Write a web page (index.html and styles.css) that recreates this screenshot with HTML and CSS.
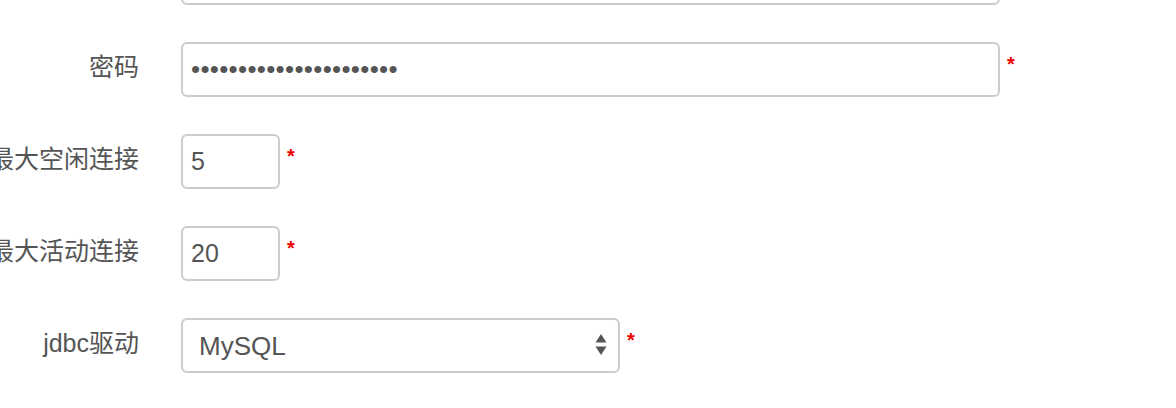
FILE: index.html
```html
<!DOCTYPE html>
<html lang="zh">
<head>
<meta charset="utf-8">
<title>数据源配置</title>
<link rel="stylesheet" href="styles.css">
</head>
<body>
<form class="form">
  <div class="row">
    <span class="label"></span>
    <input class="ctl ctl-wide" type="text" value="" aria-label="用户名">
  </div>
  <div class="row">
    <label class="label">密码</label>
    <input class="ctl ctl-wide ctl-pass" type="password" value="jdbcpassword1234567890">
    <span class="req">*</span>
  </div>
  <div class="row">
    <label class="label">最大空闲连接</label>
    <input class="ctl ctl-small" type="text" value="5">
    <span class="req">*</span>
  </div>
  <div class="row">
    <label class="label">最大活动连接</label>
    <input class="ctl ctl-small" type="text" value="20">
    <span class="req">*</span>
  </div>
  <div class="row">
    <label class="label">jdbc驱动</label>
    <div class="select-wrap">
      <select class="ctl ctl-select">
        <option>MySQL</option>
        <option>Oracle</option>
        <option>PostgreSQL</option>
      </select>
      <svg class="select-arrows" width="12" height="24" viewBox="0 0 12 24" aria-hidden="true">
        <path d="M6 1 L11.5 9.5 L0.5 9.5 Z" fill="#555"/>
        <path d="M0.5 13.5 L11.5 13.5 L6 22 Z" fill="#555"/>
      </svg>
    </div>
    <span class="req">*</span>
  </div>
</form>
</body>
</html>
```

FILE: styles.css
```css
html, body {
  margin: 0;
  padding: 0;
  background: #fff;
  overflow: hidden;
}

body {
  width: 1176px;
  height: 408px;
  font-family: "Liberation Sans", "Noto Sans CJK SC", sans-serif;
  color: #555;
}

.form {
  display: flex;
  flex-direction: column;
  gap: 38px;
  margin-top: -50px;
}

.row {
  display: flex;
  align-items: flex-start;
  height: 54px;
}

.label {
  flex: 0 0 139px;
  width: 139px;
  display: flex;
  justify-content: flex-end;
  white-space: nowrap;
  font-size: 25px;
  line-height: 30px;
  padding-top: 10px;
  margin-right: 42px;
  color: #555;
}

.ctl {
  box-sizing: border-box;
  height: 55px;
  border: 2px solid #ccc;
  border-radius: 6px;
  background: #fff;
  font-family: "Liberation Sans", "Noto Sans CJK SC", sans-serif;
  font-size: 25px;
  color: #555;
  padding: 0 8px;
  outline: none;
  margin: 0;
}

.ctl-wide {
  width: 819px;
}

.ctl-pass {
  letter-spacing: 0.3px;
  font-size: 26px;
}

.ctl-small {
  width: 99px;
}

.select-wrap {
  position: relative;
  width: 439px;
  height: 55px;
}

.ctl-select {
  -webkit-appearance: none;
  appearance: none;
  width: 439px;
  padding-left: 16px;
  font-size: 26px;
}

.select-arrows {
  position: absolute;
  right: 13px;
  top: 15px;
}

.req {
  color: #e00;
  font-size: 20px;
  font-weight: bold;
  line-height: 20px;
  margin-left: 7px;
  padding-top: 12px;
}
```
